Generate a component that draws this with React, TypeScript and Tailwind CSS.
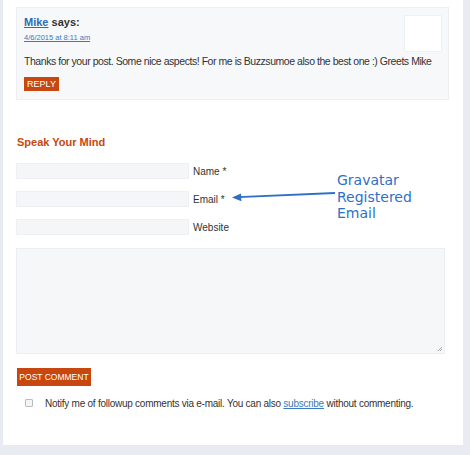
import React from "react"

export default function App() {
  return (
    <div className="relative w-[470px] h-[455px] bg-[#e9ebf2] font-['Liberation_Sans',Arial,sans-serif] text-[#333]">
      <div className="ml-[3px] w-[460px] h-[445px] bg-white pl-[13px] pt-[7px]">
        {/* Comment */}
        <div className="w-[433px] h-[93px] bg-[#f7f8fa] border border-[#eceef2] pl-[7px] pr-[6px] pt-[7px]">
          <div className="float-right w-[38px] h-[37px] bg-white border border-[#f0f1f4]" />
          <div className="pt-[1px] text-[11px] leading-[13px] font-bold text-[#333]">
            <a className="text-[#2a6db5] underline">Mike</a> says:
          </div>
          <div className="mt-[4px] text-[7.5px] leading-[10px] text-[#3c7bc0] underline">
            4/6/2015 at 8:11 am
          </div>
          <p className="mt-[11px] text-[10.5px] tracking-[-0.45px] leading-[14px] text-[#333] whitespace-nowrap">
            Thanks for your post. Some nice aspects! For me is Buzzsumoe also the best one :) Greets Mike
          </p>
          <div className="mt-[9px] w-[35px] h-[14px] bg-[#c8470f] text-white text-[9px] leading-[14px] text-center">
            REPLY
          </div>
        </div>

        {/* Form */}
        <h3 className="mt-[35px] ml-[1px] text-[11px] leading-[14px] font-bold text-[#c6480f]">
          Speak Your Mind
        </h3>
        <div className="mt-[14px] flex flex-col gap-[12px]">
          {["Name *", "Email *", "Website"].map((label) => (
            <div key={label} className="flex items-center h-[16px]">
              <div className="w-[173px] h-[16px] bg-[#f5f6f8] border border-[#eef0f3]" />
              <span className="ml-[4px] text-[10px] text-[#333]">{label}</span>
            </div>
          ))}
        </div>
        <div className="mt-[13px] w-[429px] h-[106px] bg-[#f6f7f9] border border-[#eceef2] relative">
          <svg className="absolute right-[1px] bottom-[1px]" width="6" height="6" viewBox="0 0 6 6">
            <path d="M5 1 L1 5 M5 3 L3 5" stroke="#999" strokeWidth="0.8" />
          </svg>
        </div>
        <div className="mt-[14px] ml-[1px] w-[74px] h-[18px] bg-[#c8470f] text-white text-[8.5px] leading-[18px] text-center whitespace-nowrap">
          POST COMMENT
        </div>
        <div className="mt-[10px] flex items-center h-[14px]">
          <div className="ml-[9px] w-[8px] h-[8px] border border-[#b9bcc2] rounded-[1px] bg-[#f3f4f6]" />
          <span className="ml-[12px] text-[10px] tracking-[-0.25px] text-[#333] whitespace-nowrap">
            Notify me of followup comments via e-mail. You can also{" "}
            <a className="text-[#3c7bc0] underline">subscribe</a> without commenting.
          </span>
        </div>
      </div>

      {/* Annotation */}
      <svg className="absolute left-[228px] top-[188px]" width="112" height="16" viewBox="0 0 112 16">
        <path d="M10 9.2 L107 5" stroke="#2f70c6" strokeWidth="1.8" fill="none" />
        <path d="M4 9.6 L13 5.6 L13.4 13.2 Z" fill="#2f70c6" />
      </svg>
      <div className="absolute left-[337px] top-[172px] font-['DejaVu_Sans',sans-serif] text-[14px] leading-[16.5px] text-[#2f70c6]">
        Gravatar
        <br />
        Registered
        <br />
        Email
      </div>
    </div>
  )
}
